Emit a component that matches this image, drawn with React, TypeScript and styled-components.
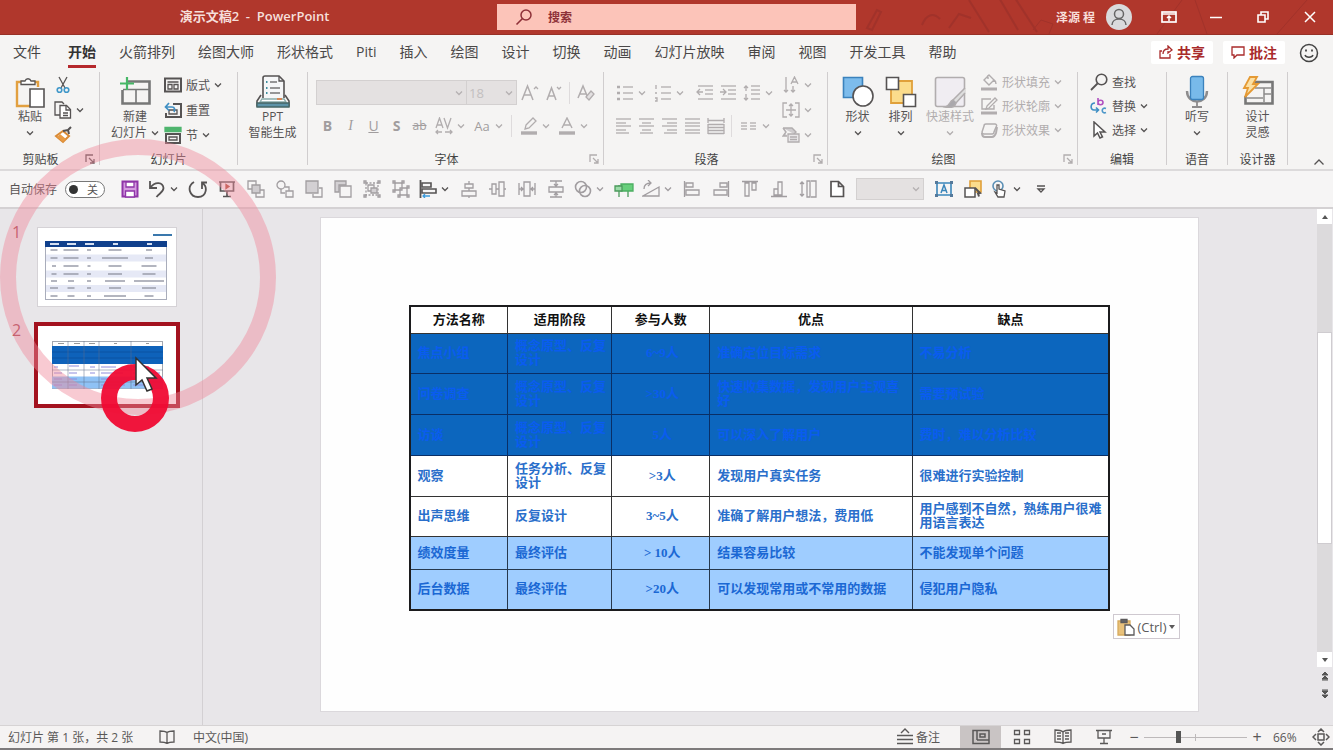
import React from "react";
import styled, { createGlobalStyle } from "styled-components";

const INK = "#565353";
const DIM = "#b1adae";
const RED = "#b0372c";

const GlobalStyle = createGlobalStyle`
  * { box-sizing: border-box; }
  html, body, #root { height: 100%; margin: 0; }
  body {
    font-family: "Open Sans", "Noto Sans CJK SC", sans-serif;
    font-size: 12px;
    color: #444;
    background: #e8e6e8;
  }
  button, select, input { font: inherit; color: inherit; margin: 0; }
  button { background: none; border: 0; padding: 0; cursor: default; white-space: nowrap; }
`;

/* ---------- icons ---------- */

type Glyph = { w: number; h: number; art: React.ReactNode };

const g = (w: number, h: number, art: React.ReactNode): Glyph => ({ w, h, art });

const bars = (rows: [number, number, number][]) => (
  <>
    {rows.map(([x, y, len]) => (
      <path key={`${x}-${y}`} d={`M${x} ${y}h${len}`} />
    ))}
  </>
);

const GLYPHS: Record<string, Glyph> = {
  chevron: g(8, 6, <path d="M1 1.500l3 3 3-3" />),
  caretUp: g(12, 8, <path d="M1.500 6.500L6 2l4.500 4.500" />),
  launcher: g(10, 10, <path d="M1 8V1h7M4 4l4.500 4.500M9 5v4H5" />),
  search: g(18, 18, <><circle cx="11" cy="7" r="5" strokeWidth="1.500" /><path d="M7.500 10.500L1.500 16.500" strokeWidth="1.600" /></>),
  paste: g(32, 32, <>
    <path d="M9 6H3v24h13" stroke="#e2a040" strokeWidth="2.400" /><path d="M19 6h5v5" stroke="#e2a040" strokeWidth="2.400" />
    <path d="M7 8.500V5h4c1-3 5-3 6 0h4v3.500z" fill="#fff" /><path d="M16 13h14v18H16z" fill="#fff" strokeWidth="1.600" />
  </>),
  cut: g(18, 18, <><path d="M5 1l6 11M13 1L7 12" /><circle cx="5.500" cy="14" r="2.300" stroke="#3f97c9" strokeWidth="1.600" /><circle cx="12.500" cy="14" r="2.300" stroke="#3f97c9" strokeWidth="1.600" /></>),
  copy: g(18, 18, <><path d="M6 14H1V1h7l2 2" /><path d="M6 4.500h6.500l4 4V17H6z" fill="#fff" /><path d="M12 5v4h4" /><path d="M9 12h5M9 14.500h5" /></>),
  painter: g(18, 18, <><path d="M9 5l6 5-6 6-7-6z" fill="#fff" stroke="#d98a35" strokeWidth="2" /><path d="M3 11l6 5 3-3-6-5z" fill="#e89a43" stroke="none" /><path d="M9 5l5-1 3-3M14 4l1 4" strokeWidth="2" /></>),
  newSlide: g(32, 32, <><path d="M9 5.500h21.500v22H3.500V14" strokeWidth="2.600" stroke="#777" /><path d="M4 13.500h26M17 14v13" stroke="#777" strokeWidth="1.600" /><path d="M8 1v13M1 7.500h14" stroke="#46b766" strokeWidth="2.200" /></>),
  layout: g(18, 18, <><rect x="1" y="2.500" width="16" height="13" strokeWidth="2" /><path d="M3.500 6h11" strokeWidth="1.500" /><path d="M4 8.500h4v4.500H4zM10 8.500h4v4.500h-4z" /></>),
  reset: g(18, 18, <><path d="M9 3h8v13H2v-4" strokeWidth="2" /><path d="M5 9h8v4H5z" /><path d="M2 6h6c3 0 3 3 2 5M5 2L1.500 6 5 9.500" stroke="#3f8fc4" strokeWidth="1.700" /></>),
  section: g(18, 18, <><path d="M1 1.500h16v4H1z" fill="#4fb56e" stroke="#4fb56e" /><rect x="2" y="8" width="14" height="9" strokeWidth="2" /><path d="M5 11h8v3H5z" /></>),
  pptGen: g(36, 34, <>
    <path d="M8 23V3c0-1 1-2 2-2h14l5 5v17" fill="#f6f7f8" strokeWidth="1.600" /><path d="M24 1v5h5" />
    <path d="M15 7h7M15 13h10M15 18h10" stroke="#777" strokeWidth="1.600" /><path d="M11 7h1.500M11 13h1.500M11 18h1.500" stroke="#3e8f9f" strokeWidth="2" />
    <path d="M6 20l-4 6v5h32v-5l-4-6" strokeWidth="1.600" /><path d="M7 24h22l2 3H5z" fill="#fff" stroke="#8aa" /><path d="M2 28h32v4H2z" fill="#5d93a8" stroke="#466" /><path d="M22 24h5" stroke="#e0773b" strokeWidth="1.600" />
  </>),
  shapes: g(32, 32, <><path d="M1.500 1.500h19v20h-19z" fill="#7dbcec" stroke="#3b82bd" strokeWidth="1.600" /><circle cx="21" cy="20" r="10" fill="#fff" strokeWidth="1.600" /></>),
  arrange: g(32, 32, <><path d="M6 5h21v22H6z" fill="#fbdc8c" stroke="#e0a03a" strokeWidth="1.800" /><path d="M1.500 1.500h12v12h-12zM18.500 18.500h12v12h-12z" fill="#fff" strokeWidth="1.600" /></>),
  quick: g(32, 32, <><rect x="1.500" y="1.500" width="29" height="29" rx="2" fill="#f0edf2" strokeWidth="1.600" /><path d="M31 12L19 24l3 3 9-10" fill="#ddd" strokeWidth="1.500" /><path d="M19 24c-4 1-2 5-8 7 5 1 10 1 11-4" fill="#aaa8ac" /></>),
  fill: g(18, 18, <><path d="M9 2l5 5-5 5-5-5zM8 2v4M14 7c2 1 2 3 2 4" strokeWidth="1.400" /><path d="M1 16h16" strokeWidth="3" /></>),
  outline: g(18, 18, <><path d="M11 2H2v10h12V8" strokeWidth="1.400" /><path d="M7 9l8-8 2 2-8 8-3 1z" /><path d="M1 16h16" strokeWidth="3" /></>),
  effects: g(18, 18, <><path d="M6 3h9c1 0 2 1 1.500 2L14 11c0 1-1 2-2 2H4c-2 0-2-1-2-2l2-6c0-1 1-2 2-2z" strokeWidth="1.500" /><path d="M2 12c0 3 1 4 3 4h7c2 0 3-1 4-4l1-6" strokeWidth="2" /></>),
  find: g(18, 18, <><circle cx="11.500" cy="6.500" r="5.300" strokeWidth="1.600" /><path d="M7.500 10.500L1 17" strokeWidth="1.800" /></>),
  replace: g(18, 18, <><path d="M8 1v7M8 5.500c0-3 5-3 5 0s-5 3-5 0" stroke="#b04fc0" strokeWidth="1.600" /><path d="M5 6c-5 0-5 7-1 7h4M6 10.500L8.500 13 6 15.500" stroke="#3f8fc4" strokeWidth="1.600" /><path d="M16 11.500c-5-2-5 6 0 4" stroke="#4d97c9" strokeWidth="1.600" /></>),
  select: g(18, 18, <path d="M4 1v14l3.500-3 2.500 5 2.500-1.200L10 11h5z" fill="#fff" strokeWidth="1.500" />),
  mic: g(32, 34, <><path d="M6 16c0 14 20 14 20 0" stroke="#8e8c8d" strokeWidth="2.400" /><path d="M16 26v6M11 32h10" stroke="#8e8c8d" strokeWidth="1.800" /><rect x="9.500" y="1.500" width="13" height="23" rx="2" fill="#78baea" stroke="#3b82bd" /></>),
  ideas: g(32, 32, <><path d="M12 6h18.500v21.500H3.500V20" strokeWidth="2.600" stroke="#777" /><path d="M13 12h16M22 12v14M22 18h7M5 22h16" stroke="#8c8a8b" strokeWidth="1.500" /><path d="M8 1h7l-4 7h5L3 21l3-9H2z" fill="#fbe0a4" stroke="#e59a34" strokeWidth="1.800" /></>),
  bullets: g(18, 18, <><path d="M1 3h3M1 9h3M1 15h3" strokeWidth="2.400" />{bars([[7, 3, 10], [7, 9, 10], [7, 15, 10]])}</>),
  numbers: g(18, 18, <><path d="M2 1v4M1 9h2M1 14h2v3H1" />{bars([[7, 3, 10], [7, 9, 10], [7, 15, 10]])}</>),
  outdent: g(18, 18, <>{bars([[2, 2, 15], [9, 6, 8], [9, 10, 8], [2, 15, 15]])}<path d="M7 8H1M4 5L1 8l3 3" /></>),
  indent: g(18, 18, <>{bars([[2, 2, 15], [9, 6, 8], [9, 10, 8], [2, 15, 15]])}<path d="M1 8h6M4 5l3 3-3 3" /></>),
  spacing: g(18, 18, <>{bars([[8, 2, 9], [8, 6, 9], [8, 10, 9], [8, 15, 9]])}<path d="M3 2v5M1 4l2-2 2 2M3 10v6M1 14l2 2 2-2" /></>),
  left: g(18, 18, bars([[1, 2, 15], [1, 6, 10], [1, 9, 15], [1, 13, 10], [1, 16, 13]])),
  center: g(18, 18, bars([[1, 2, 15], [4, 6, 9], [1, 9, 15], [4, 13, 9], [2, 16, 13]])),
  right: g(18, 18, bars([[1, 2, 15], [6, 6, 10], [1, 9, 15], [6, 13, 10], [3, 16, 13]])),
  justify: g(18, 18, bars([[1, 2, 15], [1, 6, 15], [1, 9, 15], [1, 13, 15], [1, 16, 15]])),
  distribute: g(18, 18, <><path d="M1 1v5M17 1v5M1 3.500h16M1 7.500h16M1 10.500h16M1 13.500h16M1 16.500h16M1 7v10M17 7v10" /></>),
  columns: g(18, 18, bars([[1, 6, 6], [1, 9, 6], [1, 12, 6], [10, 6, 6], [10, 9, 6], [10, 12, 6]])),
  direction: g(18, 18, <><path d="M4 1v15M2 14l2 2 2-2M11 10v6M9 14l2 2 2-2M9 8l3.500-7L16 8M10 6h5" /></>),
  alignText: g(18, 18, <><path d="M5 2H1v14h4M13 2h4v14h-4M9 3v12M4 9h10M7 5l2-2 2 2M7 13l2 2 2-2" /></>),
  smartArt: g(18, 18, <><path d="M1 2h9l4 4-2 2M1 2l3 4-3 4h4" fill="#cfccce" strokeWidth="1.400" /><path d="M6 8h11v8H6z" fill="#e9e7e8" /><path d="M8 11h7M8 13.500h7" /></>),
  grow: g(20, 18, <><path d="M2 16L7.500 2 13 16M4 11h7" strokeWidth="1.500" /><path d="M14 5l2-2 2 2" /></>),
  shrink: g(20, 18, <><path d="M3 16L7.500 4 12 16M5 12h5" strokeWidth="1.500" /><path d="M13 3l2 2 2-2" /></>),
  clear: g(20, 18, <><path d="M2 14L7 2l5 12M4 10h6" strokeWidth="1.500" /><path d="M10 13l5-6 3 3-5 6z" fill="#e3e0e1" /></>),
  kerning: g(18, 18, <><path d="M1 11L4.500 1 8 11M2 8h5M9 1l3.500 10L16 1" strokeWidth="1.300" /><path d="M1 15h6M10 15h7M3 13l-2 2 2 2M15 13l2 2-2 2" /></>),
  pen: g(18, 18, <><path d="M6 8l7-7 3 3-7 7-4 1z" strokeWidth="1.300" /><path d="M1 16h16" strokeWidth="3.400" /></>),
  fontColor: g(18, 18, <><path d="M4 11L9 1l5 10M6 8h6" strokeWidth="1.400" /><path d="M1 16h16" strokeWidth="3.400" /></>),
  save: g(18, 18, <><path d="M1.500 1.500h15v15h-15z" fill="#d59be0" stroke="#8f35a8" strokeWidth="2" /><path d="M5 2h8v5H5z" fill="#fff" stroke="#8f35a8" /><path d="M4.500 11h9v6h-9z" fill="#fff" stroke="#8f35a8" strokeWidth="1.400" /></>),
  undo: g(18, 18, <path d="M2 1v7h7M2.500 7.500C7 1 15 2 15.500 8c0 4-4 5-7 9" strokeWidth="1.800" />),
  redo: g(20, 18, <path d="M6 2c-8 5-4 15 4 15 9 0 10-11 4-14M14 9V2.500h5" strokeWidth="1.800" />),
  show: g(18, 18, <><path d="M1 2h16M2.500 2v9h13V2M9 11v5M5 16.500h8" strokeWidth="1.700" /><path d="M8 4.500l3 2-3 2z" fill="#b04a36" stroke="#b04a36" /></>),
  forward: g(18, 18, <><path d="M1 1h8v8H1zM9 10h8v7H9z" /><path d="M5 5h8v8H5z" fill="#cfcccf" /></>),
  backward: g(18, 18, <><circle cx="5" cy="5" r="4" /><path d="M9 7h4v4M5 9v4h4M10 11h7v6h-7z" /></>),
  front: g(18, 18, <><path d="M8 14v3h9V8h-3" /><path d="M1 1h12v12H1z" fill="#d3d0d3" /></>),
  back: g(18, 18, <><path d="M1 1h11v4H5v7H1z" fill="#d3d0d3" /><path d="M6 6h11v11H6z" /></>),
  group: g(18, 18, <><path d="M3 3h12v12H3z" strokeDasharray="2 1.500" /><path d="M5 5h6v6H5z" /><path d="M8 8h6v5H8z" fill="#d3d0d3" /><path d="M1 1h2v2H1zM15 1h2v2h-2zM1 15h2v2H1zM15 15h2v2h-2z" /></>),
  ungroup: g(18, 18, <><path d="M3 3h7v7H3zM8 8h7v7H8z" /><path d="M1 1h2v2H1zM10 1h2v2h-2zM1 10h2v2H1zM15 6h2v2h-2zM15 15h2v2h-2zM6 15h2v2H6z" /></>),
  alignMenu: g(18, 18, <><path d="M1.500 0v18" strokeWidth="1.800" /><path d="M3 3h9v4H3zM3 9h14v4H3z" strokeWidth="1.600" /><path d="M4 16h7M6 14l-2 2 2 2" stroke="#3b9adb" /></>),
  alignCenterH: g(18, 18, <path d="M5 4h8v4H5zM2 11h14v5H2zM9 1v3M9 8v3M9 16v2" />),
  alignMiddle: g(18, 18, <path d="M3 4h4v10H3zM10 2h5v14h-5zM0 9h3M7 9h3M15 9h2" />),
  distH: g(18, 18, <path d="M1 3v12M17 3v12M6 2h6v14H6zM1 9h4M3 7l2 2-2 2M17 9h-4M15 7l-2 2 2 2" />),
  distV: g(18, 18, <path d="M3 1h12M3 17h12M2 7h14v5H2zM9 1v5M7 4l2 2 2-2M9 17v-4M7 15l2-2 2 2" />),
  merge: g(18, 18, <><circle cx="7" cy="7" r="5.500" strokeWidth="1.600" /><circle cx="11" cy="11" r="5.500" strokeWidth="1.600" /></>),
  flag: g(20, 18, <><path d="M5 5v12M14 11v6" stroke="#4c9a5c" /><path d="M7 4h12v7H7z" fill="#67cf7b" stroke="#4cae62" /><path d="M1 6h7v5H1z" fill="#9bdba8" stroke="#4c9a5c" /></>),
  rotate: g(18, 18, <><path d="M1 16h16V7z" /><path d="M2 9c0-4 3-6 7-6M6 0l3 3-3 3" /></>),
  alignL: g(18, 18, <path d="M1.500 1v16M3 3h7v4H3zM3 10h13v5H3z" />),
  alignR: g(18, 18, <path d="M16.500 1v16M8 3h7v4H8zM2 10h13v5H2z" />),
  alignT: g(18, 18, <path d="M1 1.500h16M4 3h4v13H4zM11 3h4v7h-4z" />),
  alignB: g(18, 18, <path d="M1 16.500h16M4 9h4v6H4zM8 2h4v13H8z" />),
  sameH: g(18, 18, <path d="M8 1h3v16H8zM12 1h5v16h-5M3 2v14M1 4l2-2 2 2M1 14l2 2 2-2" />),
  page: g(16, 18, <path d="M2 1.500h7.500l5 5v10H2zM9.500 1.500v5h5" fill="#fff" strokeWidth="1.700" />),
  textBox: g(18, 18, <><path d="M2 3h14v12H2z" stroke="#3b86ba" strokeWidth="1.600" /><path d="M6 13l3-8 3 8M7 10.500h4" stroke="#3b86ba" strokeWidth="1.500" /><path d="M0 1h3v3H0zM15 1h3v3h-3zM0 14h3v3H0zM15 14h3v3h-3z" fill="#55799a" stroke="none" /></>),
  pickObj: g(18, 18, <><path d="M6 1h11v11H6z" fill="#fbdc8c" stroke="#e0a03a" strokeWidth="1.600" /><path d="M1 8h10v9H1z" fill="#fff" strokeWidth="1.500" /><path d="M11 8l5 5-2 .5 1 3" strokeWidth="2" /></>),
  touch: g(18, 18, <><circle cx="7" cy="6" r="5" stroke="#5b8fb5" strokeWidth="1.600" /><path d="M6 5v8l-2-1 3 5h6l1-6-6-2V5z" fill="#fff" strokeWidth="1.300" /></>),
  more: g(10, 8, <path d="M1 1h8M2 4l3 3 3-3z" />),
  share: g(14, 14, <path d="M3 6H1v7h10V9M4 9c0-4 3-5 5-5V1l4 4-4 3V6" />),
  comment: g(14, 14, <path d="M1 2h12v8H6l-3 3v-3H1z" />),
  smile: g(20, 20, <><circle cx="10" cy="10" r="8.500" strokeWidth="1.500" /><path d="M6 12c1 3 7 3 8 0" strokeWidth="1.400" /><path d="M7 6.500v2M13 6.500v2" strokeWidth="1.800" /></>),
  ribbonMode: g(16, 12, <><rect x="1" y="1" width="14" height="10" strokeWidth="1.700" /><path d="M1 3h14M8 10V5M6 7l2-2 2 2" strokeWidth="1.500" /></>),
  minimize: g(12, 12, <path d="M0 6.500h12" strokeWidth="1.500" />),
  restore: g(12, 12, <path d="M1 4h7v7H1zM4 3.500V1h7v7H8.500" strokeWidth="1.600" />),
  close: g(12, 12, <path d="M1 1l10 10M11 1L1 11" strokeWidth="1.500" />),
  book: g(16, 14, <path d="M8 2.500C6 1 4 1 1 1v11c3 0 5 0 7 1.500C10 12 11 12 15 12V1c-3 0-5 0-7 1.500zM8 3v10" />),
  notes: g(18, 18, <path d="M1 7.500h16M1 11.500h16M1 15.500h16M5 5l4-4 4 4" strokeWidth="1.400" />),
  normal: g(18, 16, <path d="M1 1.500h16v13H1zM5 2v9M5 11h12M8 5h5v3H8z" strokeWidth="1.500" />),
  sorter: g(18, 16, <path d="M1.500 1.500h5v4h-5zM11.500 1.500h5v4h-5zM1.500 10.500h5v4h-5zM11.500 10.500h5v4h-5z" />),
  reading: g(18, 16, <><path d="M9 3C7 1 5 1 1 1v12c4 0 6 0 8 1.500 2-1.500 4-1.500 8-1.500V1c-4 0-6 0-8 2zM9 3v11" /><path d="M3 4h4M3 7h4M3 10h4M11 4h4M11 7h4M11 10h4" /></>),
  present: g(18, 16, <path d="M1 1.500h16M3 2v7h12V2M9 9v5M5 14.500h8M7 5h4" strokeWidth="1.300" />),
  fit: g(18, 18, <path d="M6 6h6v6H6zM6 4l3-3 3 3M6 14l3 3 3-3M4 6L1 9l3 3M14 6l3 3-3 3" strokeWidth="1.500" />),
  person: g(26, 26, <><circle cx="13" cy="13" r="13" fill="#d9dadc" stroke="none" /><circle cx="13" cy="10" r="4.500" strokeWidth="1.500" /><path d="M6 21c0-8 14-8 14 0" strokeWidth="1.500" /></>),
  up: g(8, 6, <path d="M1 5l3-4 3 4z" fill="currentColor" stroke="none" />),
  down: g(8, 6, <path d="M1 1l3 4 3-4z" fill="currentColor" stroke="none" />),
  prev: g(8, 10, <path d="M1 4l3-3 3 3zM1 8l3-3 3 3zM1 9h6" fill="currentColor" strokeWidth="1" />),
  next: g(8, 10, <path d="M1 1h6M1 2l3 3 3-3zM1 6l3 3 3-3z" fill="currentColor" strokeWidth="1" />),
  pasteSmall: g(18, 18, <><path d="M1 3h12v14H1z" fill="#e9c17a" stroke="#d8ab5d" /><path d="M4 1.500h6v3H4z" fill="#666" /><path d="M8 7h5l4 4v6H8z" fill="#fff" /></>),
};

const Svg = styled.svg`
  display: block;
  flex: none;
  fill: none;
  stroke: currentColor;
  stroke-width: 1.300;
`;

const Icon = ({ name }: { name: string }) => {
  const { w, h, art } = GLYPHS[name];
  return (
    <Svg width={w} height={h} viewBox={`0 0 ${w} ${h}`} aria-hidden="true">
      {art}
    </Svg>
  );
};

/* ---------- frame ---------- */

const Window = styled.div`
  position: relative;
  display: flex;
  flex-direction: column;
  min-height: 100%;
  overflow: hidden;
  border-bottom: 2px solid #7d7a7b;
`;

const TitleBar = styled.header`
  position: relative;
  display: grid;
  grid-template-columns: 497fr 359fr 477fr;
  align-items: center;
  height: 35px;
  background: ${RED};
  border-bottom: 1px solid #973026;
  color: #fff;
`;

const TitlePattern = styled.svg`
  position: absolute;
  right: 0;
  top: 0;
  width: 476px;
  height: 34px;
  fill: none;
  stroke: #98302a;
  opacity: 0.6;
`;

const DocTitle = styled.h1`
  margin: 0;
  padding-left: 12px;
  text-align: center;
  font-size: 13px;
  font-weight: 600;
  line-height: 16px;
  padding-bottom: 2px;
  color: #f6dfdb;
  white-space: pre;
`;

const SearchBox = styled.label`
  display: flex;
  align-items: center;
  gap: 13px;
  height: 26px;
  padding-left: 18px;
  background: #fcc4b9;
  color: #8e3038;
`;

const SearchInput = styled.input`
  flex: 1;
  min-width: 0;
  border: 0;
  outline: 0;
  background: none;
  font-weight: 600;
  &::placeholder { color: #8e3038; opacity: 1; }
`;

const WindowControls = styled.div`
  position: relative;
  display: flex;
  align-items: center;
  justify-content: flex-end;
`;

const Account = styled.button`
  display: flex;
  align-items: center;
  gap: 11px;
  margin-right: 13px;
  color: #f8dfdb;
  font-weight: 600;
  svg { color: #666; }
`;

const WindowButton = styled.button`
  display: grid;
  place-items: center;
  width: 47px;
  height: 34px;
`;

const TabRow = styled.nav`
  display: flex;
  align-items: center;
  height: 35px;
  background: #f5f4f3;
  font-size: 14px;
`;

const FileTab = styled.button`
  width: 54px;
  height: 30px;
  padding-bottom: 3px;
  text-align: center;
`;

const TabList = styled.div`
  display: flex;
  flex: 1;
  gap: 23px;
  padding-left: 14px;
`;

const Tab = styled.button<{ $active?: boolean }>`
  height: 30px;
  border-bottom: 3px solid ${(p) => (p.$active ? "#b5282c" : "transparent")};
  font-weight: ${(p) => (p.$active ? 700 : 400)};
  color: ${(p) => (p.$active ? "#333" : "#4a4848")};
`;

const TabActions = styled.div`
  display: flex;
  align-items: center;
  gap: 10px;
  padding-right: 14px;
`;

const ActionButton = styled.button`
  display: flex;
  align-items: center;
  justify-content: center;
  gap: 4px;
  width: 62px;
  height: 23px;
  padding-bottom: 2px;
  background: #fff;
  border-radius: 2px;
  color: #a92b2b;
  font-weight: 700;
`;

const FeedbackButton = styled.button`
  margin-left: 4px;
`;

/* ---------- ribbon ---------- */

const Ribbon = styled.section`
  display: flex;
  height: 101px;
  background: #f5f4f3;
  border-bottom: 2px solid #dcdadb;
`;

const Group = styled.div<{ $w: number }>`
  display: flex;
  flex-direction: column;
  flex: none;
  width: ${(p) => p.$w}px;
`;

const Divider = styled.div`
  flex: none;
  width: 1px;
  margin: 2px 0 4px;
  background: #d0cdce;
`;

const GroupBody = styled.div<{ $left?: number }>`
  display: flex;
  flex: 1;
  padding-left: ${(p) => p.$left ?? 8}px;
`;

const GroupFooter = styled.div`
  display: flex;
  align-items: center;
  height: 20px;
`;

const GroupName = styled.span`
  flex: 1;
  text-align: center;
`;

const Launcher = styled.button<{ $dim?: boolean }>`
  width: 18px;
  padding-left: 4px;
  color: ${(p) => (p.$dim ? DIM : INK)};
`;

const BigButton = styled.button<{ $w: number; $dim?: boolean }>`
  display: flex;
  flex-direction: column;
  align-items: center;
  align-self: flex-start;
  width: ${(p) => p.$w}px;
  padding-top: 5px;
  line-height: 16px;
  color: ${(p) => (p.$dim ? DIM : INK)};
`;

const BigIcon = styled.span`
  display: grid;
  place-items: center;
  height: 34px;
`;

const BigLine = styled.span`
  display: flex;
  align-items: center;
  gap: 4px;
  height: 16px;
`;

const Stack = styled.div<{ $tight?: boolean }>`
  display: grid;
  align-content: start;
  grid-auto-rows: ${(p) => (p.$tight ? 24 : 25)}px;
  padding-top: ${(p) => (p.$tight ? 0 : 2)}px;
`;

const SmallButton = styled.button<{ $dim?: boolean }>`
  display: flex;
  align-items: center;
  gap: 4px;
  padding: 0 2px;
  color: ${(p) => (p.$dim ? DIM : INK)};
`;

const ToolRows = styled.div<{ $w?: number }>`
  display: flex;
  flex-direction: column;
  gap: 8px;
  width: ${(p) => (p.$w ? `${p.$w}px` : "auto")};
  padding-top: 10px;
  color: ${DIM};
`;

const ToolRow = styled.div`
  display: flex;
  align-items: center;
  height: 25px;
`;

const ToolPart = styled.div`
  display: flex;
  align-items: center;
  & + & { margin-left: 5px; }
`;

const IconButton = styled.button<{ $w?: number }>`
  display: grid;
  place-items: center;
  flex: none;
  width: ${(p) => p.$w ?? 23}px;
  height: 24px;
`;

const LetterButton = styled(IconButton)<{ $kind: "b" | "i" | "u" | "s" | "ab" }>`
  font-size: ${(p) => (p.$kind === "ab" ? 12 : 14)}px;
  color: #a19d9e;
  font-weight: ${(p) => (p.$kind === "b" || p.$kind === "s" ? 700 : 400)};
  font-style: ${(p) => (p.$kind === "i" ? "italic" : "normal")};
  font-family: ${(p) => (p.$kind === "i" ? '"Liberation Serif", serif' : "inherit")};
  text-decoration: ${(p) => (p.$kind === "u" ? "underline" : p.$kind === "ab" ? "line-through" : "none")};
`;

const DropButton = styled.button`
  display: flex;
  align-items: center;
  gap: 4px;
  flex: none;
  width: 38px;
  height: 24px;
  padding-left: 4px;
`;

const CaseLabel = styled.span`
  width: 18px;
  font-size: 13px;
  color: #a19d9e;
`;

const ToolSep = styled.span`
  width: 1px;
  height: 22px;
  margin: 0 4px;
  background: #dedbdc;
`;

const Combo = styled.label<{ $w: number; $h: number }>`
  display: grid;
  align-items: center;
  flex: none;
  width: ${(p) => p.$w}px;
  height: ${(p) => p.$h}px;
  background: #e4e1e1;
  border: 1px solid #d3d0d0;
  color: #b5b1b2;
  & > * { grid-area: 1 / 1; }
  svg { justify-self: end; margin-right: 3px; pointer-events: none; }
  & + & { border-left: 0; }
`;

const ComboSelect = styled.select`
  appearance: none;
  width: 100%;
  border: 0;
  padding: 0 2px;
  background: none;
  outline: 0;
  font-size: 13px;
`;

const Collapse = styled.button`
  flex: 1;
  display: flex;
  align-items: flex-end;
  justify-content: flex-end;
  padding: 0 8px 3px 0;
  color: ${INK};
`;

/* ---------- quick access ---------- */

const QuickBar = styled.section`
  display: flex;
  align-items: center;
  height: 38px;
  padding-left: 9px;
  background: #f6f5f5;
  border-bottom: 2px solid #d4d1d3;
  color: #a19da0;
`;

const AutoSave = styled.label`
  display: flex;
  align-items: center;
  gap: 8px;
  width: 106px;
  color: ${INK};
`;

const Toggle = styled.span`
  display: flex;
  align-items: center;
  justify-content: space-between;
  width: 40px;
  height: 17px;
  padding: 0 6px 0 3px;
  border: 1px solid #777;
  border-radius: 9px;
  font-size: 11px;
  background: #fff;
`;

const ToggleInput = styled.input`
  appearance: none;
  width: 9px;
  height: 9px;
  border-radius: 50%;
  background: #333;
`;

const QuickButton = styled(IconButton)<{ $on?: boolean }>`
  width: 29px;
  color: ${(p) => (p.$on ? INK : "inherit")};
`;

const QuickDrop = styled(DropButton)<{ $on?: boolean }>`
  width: 39px;
  color: ${(p) => (p.$on ? INK : "inherit")};
`;

const QuickCombo = styled(Combo)`
  margin: 0 5px;
`;

/* ---------- work area ---------- */

const Work = styled.main`
  display: flex;
  flex: 1;
  background: #e8e6e9;
`;

const SlidePane = styled.ol`
  display: flex;
  flex-direction: column;
  gap: 20px;
  flex: none;
  width: 203px;
  margin: 0;
  padding: 19px 0 0 12px;
  list-style: none;
  border-right: 1px solid #d3d0d3;
`;

const SlideItem = styled.li`
  display: flex;
  gap: 4px;
`;

const SlideNumber = styled.span`
  width: 22px;
  font-size: 16px;
  line-height: 8px;
  color: #a5414d;
`;

const ThumbButton = styled.button<{ $selected?: boolean }>`
  width: 138px;
  height: 78px;
  background: #fff;
  box-shadow: ${(p) => (p.$selected ? "0 0 0 4px #a3121f" : "0 0 0 1px #d5d2d6")};
`;

const Thumb = styled.svg`
  display: block;
  width: 138px;
  height: 78px;
`;

const Stage = styled.div`
  display: flex;
  flex: 1;
  justify-content: center;
  align-items: flex-start;
  padding-top: 8px;
`;

const Slide = styled.article`
  width: 79%;
  aspect-ratio: 16 / 9;
  padding-top: 87px;
  background: #fefefe;
  border: 1px solid #dbd8dc;
`;

const TableArea = styled.div`
  position: relative;
  width: 80%;
  margin: 0 auto;
`;

const DataTable = styled.table`
  width: 100%;
  table-layout: fixed;
  border-collapse: collapse;
  border: 2px solid #1c1c1e;
  font-family: "Liberation Serif", "Noto Sans CJK SC", serif;
  font-size: 13px;
  font-weight: 700;
  line-height: 14px;
`;

const TONES = {
  head: { bg: "#ffffff", fg: "#111111", line: "#333333" },
  deep: { bg: "#0c66be", fg: "#0a5cf0", line: "#0a2f66" },
  plain: { bg: "#ffffff", fg: "#2a6fcb", line: "#333333" },
  light: { bg: "#9fcdff", fg: "#1b68d4", line: "#26384d" },
};

type Tone = keyof typeof TONES;

const Row = styled.tr<{ $tone: Tone; $h: number }>`
  height: ${(p) => p.$h}px;
  background: ${(p) => TONES[p.$tone].bg};
  color: ${(p) => TONES[p.$tone].fg};
  td, th { border: 1px solid ${(p) => TONES[p.$tone].line}; }
`;

const HeadCell = styled.th`
  padding: 0;
`;

const Cell = styled.td<{ $center?: boolean }>`
  padding: 0 4px 0 7px;
  text-align: ${(p) => (p.$center ? "center" : "left")};
`;

const PasteOptions = styled.button`
  position: absolute;
  left: 100%;
  top: 100%;
  display: flex;
  align-items: center;
  gap: 2px;
  width: 67px;
  height: 25px;
  margin: 3px 0 0 3px;
  padding: 0 3px;
  background: #fff;
  border: 1px solid #cfc9d0;
  font-size: 13px;
  color: #5c5a5b;
`;

const ScrollBar = styled.div`
  display: flex;
  flex-direction: column;
  align-items: center;
  width: 17px;
  padding-bottom: 22px;
  color: #555;
`;

const ScrollButton = styled.button<{ $plain?: boolean }>`
  display: grid;
  place-items: center;
  width: 15px;
  height: ${(p) => (p.$plain ? 18 : 15)}px;
  background: ${(p) => (p.$plain ? "none" : "#fff")};
`;

const ScrollTrack = styled.div`
  display: grid;
  grid-template-rows: 108fr 212fr 108fr;
  flex: 1;
  width: 15px;
  background: #dcdadc;
`;

const ScrollThumb = styled.div`
  grid-row: 2;
  background: #fff;
  border: 1px solid #cfccd0;
`;

/* ---------- status bar ---------- */

const StatusBar = styled.footer`
  display: flex;
  align-items: center;
  height: 23px;
  padding-left: 8px;
  background: #f5f3f3;
  border-top: 1px solid #d6d3d4;
  color: #5a5858;
`;

const StatusLeft = styled.div`
  display: flex;
  flex: 1;
  align-items: center;
  gap: 18px;
`;

const SlideCount = styled.span`
  min-width: 133px;
`;

const NotesButton = styled.button`
  display: flex;
  align-items: center;
  gap: 2px;
  margin-right: 20px;
`;

const ViewButton = styled.button<{ $on?: boolean }>`
  display: grid;
  place-items: center;
  width: 41px;
  height: 22px;
  background: ${(p) => (p.$on ? "#c9c4c4" : "none")};
`;

const ZoomSign = styled.button`
  width: 20px;
  font-size: 16px;
  line-height: 16px;
`;

const ZoomRange = styled.input`
  appearance: none;
  width: 103px;
  height: 14px;
  background: linear-gradient(#bdb9ba, #bdb9ba) center / 100% 1px no-repeat,
    linear-gradient(#bdb9ba, #bdb9ba) center / 1px 7px no-repeat;
  &::-webkit-slider-thumb {
    appearance: none;
    width: 5px;
    height: 12px;
    background: #555;
  }
`;

const ZoomValue = styled.output`
  width: 34px;
  margin-left: 6px;
`;

const FitButton = styled.button`
  margin: 0 3px 0 5px;
`;

/* ---------- click highlight over the window ---------- */

const ClickHighlight = styled.svg`
  position: absolute;
  left: 0;
  top: 138px;
  width: 278px;
  height: 300px;
  pointer-events: none;
`;

/* ---------- data ---------- */

const TABS = ["开始", "火箭排列", "绘图大师", "形状格式", "Piti", "插入", "绘图", "设计", "切换", "动画", "幻灯片放映", "审阅", "视图", "开发工具", "帮助"];

const COLUMNS: [string, string][] = [
  ["方法名称", "14%"],
  ["适用阶段", "14.900%"],
  ["参与人数", "14%"],
  ["优点", "28.900%"],
  ["缺点", "28.200%"],
];

const ROWS: { tone: Tone; h: number; cells: string[] }[] = [
  { tone: "deep", h: 40, cells: ["焦点小组", "概念原型、反复设计", "6~9人", "准确定位目标需求", "不易分析"] },
  { tone: "deep", h: 41, cells: ["问卷调查", "概念原型、反复设计", ">30人", "快速收集数据，发现用户主观喜好", "需要预试验"] },
  { tone: "deep", h: 41, cells: ["访谈", "概念原型、反复设计", "5人", "可以深入了解用户", "费时，难以分析比较"] },
  { tone: "plain", h: 41, cells: ["观察", "任务分析、反复设计", ">3人", "发现用户真实任务", "很难进行实验控制"] },
  { tone: "plain", h: 40, cells: ["出声思维", "反复设计", "3~5人", "准确了解用户想法，费用低", "用户感到不自然，熟练用户很难用语言表达"] },
  { tone: "light", h: 33, cells: ["绩效度量", "最终评估", "> 10人", "结果容易比较", "不能发现单个问题"] },
  { tone: "light", h: 41, cells: ["后台数据", "最终评估", ">20人", "可以发现常用或不常用的数据", "侵犯用户隐私"] },
];

type QuickItem = { icon: string; label: string; on?: boolean; drop?: boolean };

const QUICK_MAIN: QuickItem[] = [
  { icon: "save", label: "保存" },
  { icon: "undo", label: "撤消", on: true, drop: true },
  { icon: "redo", label: "重复", on: true },
  { icon: "show", label: "从头开始", on: true },
  { icon: "forward", label: "上移一层" },
  { icon: "backward", label: "下移一层" },
  { icon: "front", label: "置于顶层" },
  { icon: "back", label: "置于底层" },
  { icon: "group", label: "组合" },
  { icon: "ungroup", label: "取消组合" },
  { icon: "alignMenu", label: "对齐", on: true, drop: true },
  { icon: "alignCenterH", label: "水平居中" },
  { icon: "alignMiddle", label: "垂直居中" },
  { icon: "distH", label: "横向分布" },
  { icon: "distV", label: "纵向分布" },
  { icon: "merge", label: "合并形状", drop: true },
  { icon: "flag", label: "格式" },
  { icon: "rotate", label: "旋转", drop: true },
  { icon: "alignL", label: "左对齐" },
  { icon: "alignR", label: "右对齐" },
  { icon: "alignT", label: "顶端对齐" },
  { icon: "alignB", label: "底端对齐" },
  { icon: "sameH", label: "等高" },
  { icon: "page", label: "新建", on: true },
];

const QUICK_END: QuickItem[] = [
  { icon: "textBox", label: "文本框" },
  { icon: "pickObj", label: "选择窗格", on: true },
  { icon: "touch", label: "触摸模式", on: true, drop: true },
];

const QuickItems = ({ items }: { items: QuickItem[] }) => (
  <>
    {items.map(({ icon, label, on, drop }) =>
      drop ? (
        <QuickDrop key={icon} $on={on} aria-label={label}>
          <Icon name={icon} />
          <Icon name="chevron" />
        </QuickDrop>
      ) : (
        <QuickButton key={icon} $on={on} aria-label={label}>
          <Icon name={icon} />
        </QuickButton>
      )
    )}
  </>
);

const Tool = ({ icon, label }: { icon: string; label: string }) => (
  <IconButton aria-label={label}>
    <Icon name={icon} />
  </IconButton>
);

const Drop = ({ icon, label }: { icon: string; label: string }) => (
  <DropButton aria-label={label}>
    <Icon name={icon} />
    <Icon name="chevron" />
  </DropButton>
);

const Big = ({ icon, w, lines, menu, dim }: { icon: string; w: number; lines: string[]; menu?: "inline" | "below"; dim?: boolean }) => (
  <BigButton $w={w} $dim={dim}>
    <BigIcon>
      <Icon name={icon} />
    </BigIcon>
    {lines.map((line, i) => (
      <BigLine key={line}>
        {line}
        {menu === "inline" && i === lines.length - 1 && <Icon name="chevron" />}
      </BigLine>
    ))}
    {menu === "below" && (
      <BigLine>
        <Icon name="chevron" />
      </BigLine>
    )}
  </BigButton>
);

const Small = ({ icon, text, label, menu, dim }: { icon: string; text?: string; label?: string; menu?: boolean; dim?: boolean }) => (
  <SmallButton $dim={dim} aria-label={label}>
    <Icon name={icon} />
    {text}
    {menu && <Icon name="chevron" />}
  </SmallButton>
);

const Footer = ({ name, launcher, dim }: { name: string; launcher?: boolean; dim?: boolean }) => (
  <GroupFooter>
    <GroupName>{name}</GroupName>
    {launcher && (
      <Launcher $dim={dim} aria-label={`${name}选项`}>
        <Icon name="launcher" />
      </Launcher>
    )}
  </GroupFooter>
);

/* Miniature of slide 1: a striped table with a navy header. */
const FIRST_COLS = [16, 33, 51, 77, 111];
const FIRST_ROWS: [number, number[]][] = [
  [22, [7, 15, 4, 13, 6]],
  [30, [7, 15, 4, 26, 8]],
  [38, [4, 15, 3, 13, 15]],
  [46, [5, 15, 4, 14, 13]],
  [53, [6, 6, 4, 20, 30]],
  [60, [8, 7, 4, 12, 14]],
  [68, [7, 7, 4, 22, 9]],
];

const FirstThumb = () => (
  <Thumb viewBox="0 0 138 78">
    <path d="M115 7h19" stroke="#3a78ad" strokeWidth="2" />
    <rect x="7.500" y="13.500" width="121" height="58" fill="#fff" stroke="#a9adbb" />
    <path d="M8 30h120M8 46h120M8 60.500h120" stroke="#e6e9f6" strokeWidth="7" />
    <path d="M7 16h122" stroke="#10408c" strokeWidth="6" />
    {FIRST_COLS.map((x, i) => (
      <path key={x} d={`M${x - (i < 3 ? 4 : 2)} 16h${i < 3 ? 9 : 5}`} stroke="#d5e0f2" strokeWidth="2" />
    ))}
    {FIRST_ROWS.map(([y, widths]) =>
      widths.map((len, i) => (
        <path key={`${y}-${i}`} d={`M${FIRST_COLS[i] - len / 2} ${y}h${len}`} stroke="#9a9daa" strokeWidth="1.500" />
      ))
    )}
  </Thumb>
);

/* Miniature of slide 2: the table on the stage. */
const SecondThumb = () => (
  <Thumb viewBox="0 0 138 78">
    <rect x="14.500" y="15.500" width="110" height="47" fill="#fff" stroke="#a4a8b0" />
    <path d="M14 29h111" stroke="#0e62ba" strokeWidth="18" />
    <path d="M14 56.500h111" stroke="#8fc2f5" strokeWidth="12" />
    <path d="M14 26h111M14 32h111" stroke="#0a4a94" strokeWidth="0.600" />
    <path d="M30 15v48M46 15v48M61 15v48M93 15v48M14 44h111M14 56h111" stroke="#5f6f88" strokeWidth="0.500" />
    <path d="M20 17.500h6M36 17.500h6M51 17.500h6M76 17.500h3M108 17.500h3" stroke="#999" />
    <path d="M16 41h4M31 40h10M52 41h5M63 41h15M95 41h16M16 47h8M31 47h8M52 47h5M63 47h22M95 47h27M16 53h8M31 53h8M63 53h12M95 53h16M16 59h8M31 59h8M63 59h24M95 59h12" stroke="#8f8cdc" />
  </Thumb>
);

export default function App() {
  return (
    <Window>
      <GlobalStyle />

      <TitleBar>
        <TitlePattern viewBox="0 0 476 34" aria-hidden="true">
          <path d="M10 28l10-18 4 2-9 18zM65 25c5-12 12-12 18-6M92 28l10-14 12 4M112 0l20 32M141 -4l20 34M158 -2l22 34" strokeWidth="2" />
          <path d="M176 30l8-10 12 4-4 10M300 34l25-34M338 0l12 34M420 34l30-34" />
        </TitlePattern>
        <DocTitle>{"演示文稿2  -  PowerPoint"}</DocTitle>
        <SearchBox>
          <Icon name="search" />
          <SearchInput type="text" placeholder="搜索" aria-label="搜索" />
        </SearchBox>
        <WindowControls>
          <Account>
            泽源 程
            <Icon name="person" />
          </Account>
          <WindowButton aria-label="功能区显示选项"><Icon name="ribbonMode" /></WindowButton>
          <WindowButton aria-label="最小化"><Icon name="minimize" /></WindowButton>
          <WindowButton aria-label="还原"><Icon name="restore" /></WindowButton>
          <WindowButton aria-label="关闭"><Icon name="close" /></WindowButton>
        </WindowControls>
      </TitleBar>

      <TabRow>
        <FileTab>文件</FileTab>
        <TabList>
          {TABS.map((name, i) => (
            <Tab key={name} $active={i === 0}>{name}</Tab>
          ))}
        </TabList>
        <TabActions>
          <ActionButton><Icon name="share" />共享</ActionButton>
          <ActionButton><Icon name="comment" />批注</ActionButton>
          <FeedbackButton aria-label="反馈"><Icon name="smile" /></FeedbackButton>
        </TabActions>
      </TabRow>

      <Ribbon>
        <Group $w={99}>
          <GroupBody>
            <Big icon="paste" w={44} lines={["粘贴"]} menu="below" />
            <Stack>
              <Small icon="cut" label="剪切" />
              <Small icon="copy" label="复制" menu />
              <Small icon="painter" label="格式刷" />
            </Stack>
          </GroupBody>
          <Footer name="剪贴板" launcher />
        </Group>
        <Divider />

        <Group $w={137}>
          <GroupBody>
            <Big icon="newSlide" w={54} lines={["新建", "幻灯片"]} menu="inline" />
            <Stack>
              <Small icon="layout" text="版式" menu />
              <Small icon="reset" text="重置" />
              <Small icon="section" text="节" menu />
            </Stack>
          </GroupBody>
          <Footer name="幻灯片" />
        </Group>
        <Divider />

        <Group $w={69}>
          <GroupBody $left={4}>
            <Big icon="pptGen" w={61} lines={["PPT", "智能生成"]} />
          </GroupBody>
        </Group>
        <Divider />

        <Group $w={295}>
          <GroupBody>
            <ToolRows>
              <ToolRow>
                <Combo $w={151} $h={25}>
                  <ComboSelect aria-label="字体" disabled><option> </option></ComboSelect>
                  <Icon name="chevron" />
                </Combo>
                <Combo $w={50} $h={25}>
                  <ComboSelect aria-label="字号" disabled><option>18</option></ComboSelect>
                  <Icon name="chevron" />
                </Combo>
                <IconButton $w={25} aria-label="增大字号"><Icon name="grow" /></IconButton>
                <IconButton aria-label="减小字号"><Icon name="shrink" /></IconButton>
                <ToolSep />
                <IconButton aria-label="清除格式"><Icon name="clear" /></IconButton>
              </ToolRow>
              <ToolRow>
                <LetterButton $kind="b">B</LetterButton>
                <LetterButton $kind="i">I</LetterButton>
                <LetterButton $kind="u">U</LetterButton>
                <LetterButton $kind="s">S</LetterButton>
                <LetterButton $kind="ab">ab</LetterButton>
                <Drop icon="kerning" label="字符间距" />
                <DropButton aria-label="更改大小写">
                  <CaseLabel>Aa</CaseLabel>
                  <Icon name="chevron" />
                </DropButton>
                <ToolSep />
                <Drop icon="pen" label="突出显示" />
                <Drop icon="fontColor" label="字体颜色" />
              </ToolRow>
            </ToolRows>
          </GroupBody>
          <Footer name="字体" launcher dim />
        </Group>
        <Divider />

        <Group $w={223}>
          <GroupBody>
            <ToolRows $w={168}>
              <ToolRow>
                <ToolPart>
                  <Drop icon="bullets" label="项目符号" />
                  <Drop icon="numbers" label="编号" />
                </ToolPart>
                <ToolPart>
                  <Tool icon="outdent" label="降低列表级别" />
                  <Tool icon="indent" label="提高列表级别" />
                  <Drop icon="spacing" label="行距" />
                </ToolPart>
              </ToolRow>
              <ToolRow>
                <Tool icon="left" label="左对齐" />
                <Tool icon="center" label="居中" />
                <Tool icon="right" label="右对齐" />
                <Tool icon="justify" label="两端对齐" />
                <Tool icon="distribute" label="分散对齐" />
                <ToolSep />
                <Drop icon="columns" label="分栏" />
              </ToolRow>
            </ToolRows>
            <Stack>
              <Small icon="direction" label="文字方向" menu dim />
              <Small icon="alignText" label="对齐文本" menu dim />
              <Small icon="smartArt" label="转换为 SmartArt" menu dim />
            </Stack>
          </GroupBody>
          <Footer name="段落" launcher dim />
        </Group>
        <Divider />

        <Group $w={249}>
          <GroupBody>
            <Big icon="shapes" w={43} lines={["形状"]} menu="below" />
            <Big icon="arrange" w={43} lines={["排列"]} menu="below" />
            <Big icon="quick" w={56} lines={["快速样式"]} menu="below" dim />
            <Stack $tight>
              <Small icon="fill" text="形状填充" menu dim />
              <Small icon="outline" text="形状轮廓" menu dim />
              <Small icon="effects" text="形状效果" menu dim />
            </Stack>
          </GroupBody>
          <Footer name="绘图" launcher dim />
        </Group>
        <Divider />

        <Group $w={88}>
          <GroupBody $left={10}>
            <Stack $tight>
              <Small icon="find" text="查找" />
              <Small icon="replace" text="替换" menu />
              <Small icon="select" text="选择" menu />
            </Stack>
          </GroupBody>
          <Footer name="编辑" />
        </Group>
        <Divider />

        <Group $w={60}>
          <GroupBody>
            <Big icon="mic" w={44} lines={["听写"]} menu="below" />
          </GroupBody>
          <Footer name="语音" />
        </Group>
        <Divider />

        <Group $w={59}>
          <GroupBody>
            <Big icon="ideas" w={43} lines={["设计", "灵感"]} />
          </GroupBody>
          <Footer name="设计器" />
        </Group>
        <Divider />
        <Collapse aria-label="折叠功能区"><Icon name="caretUp" /></Collapse>
      </Ribbon>

      <QuickBar>
        <AutoSave>
          自动保存
          <Toggle>
            <ToggleInput type="checkbox" />
            关
          </Toggle>
        </AutoSave>
        <QuickItems items={QUICK_MAIN} />
        <QuickCombo $w={68} $h={22}>
          <ComboSelect aria-label="样式" disabled><option> </option></ComboSelect>
          <Icon name="chevron" />
        </QuickCombo>
        <QuickItems items={QUICK_END} />
        <QuickButton $on aria-label="自定义快速访问工具栏"><Icon name="more" /></QuickButton>
      </QuickBar>

      <Work>
        <SlidePane>
          <SlideItem>
            <SlideNumber>1</SlideNumber>
            <ThumbButton aria-label="幻灯片 1"><FirstThumb /></ThumbButton>
          </SlideItem>
          <SlideItem>
            <SlideNumber>2</SlideNumber>
            <ThumbButton $selected aria-label="幻灯片 2"><SecondThumb /></ThumbButton>
          </SlideItem>
        </SlidePane>

        <Stage>
          <Slide>
            <TableArea>
              <DataTable>
                <colgroup>
                  {COLUMNS.map(([name, width]) => (
                    <col key={name} width={width} />
                  ))}
                </colgroup>
                <thead>
                  <Row $tone="head" $h={27}>
                    {COLUMNS.map(([name]) => (
                      <HeadCell key={name} scope="col">{name}</HeadCell>
                    ))}
                  </Row>
                </thead>
                <tbody>
                  {ROWS.map((row) => (
                    <Row key={row.cells[0]} $tone={row.tone} $h={row.h}>
                      {row.cells.map((text, i) => (
                        <Cell key={i} $center={i === 2}>{text}</Cell>
                      ))}
                    </Row>
                  ))}
                </tbody>
              </DataTable>
              <PasteOptions>
                <Icon name="pasteSmall" />
                (Ctrl)
                <Icon name="down" />
              </PasteOptions>
            </TableArea>
          </Slide>
        </Stage>

        <ScrollBar>
          <ScrollButton aria-label="向上滚动"><Icon name="up" /></ScrollButton>
          <ScrollTrack><ScrollThumb /></ScrollTrack>
          <ScrollButton aria-label="向下滚动"><Icon name="down" /></ScrollButton>
          <ScrollButton $plain aria-label="上一张幻灯片"><Icon name="prev" /></ScrollButton>
          <ScrollButton $plain aria-label="下一张幻灯片"><Icon name="next" /></ScrollButton>
        </ScrollBar>
      </Work>

      <StatusBar>
        <StatusLeft>
          <SlideCount>幻灯片 第 1 张，共 2 张</SlideCount>
          <Icon name="book" />
          <span>中文(中国)</span>
        </StatusLeft>
        <NotesButton><Icon name="notes" />备注</NotesButton>
        <ViewButton $on aria-label="普通视图"><Icon name="normal" /></ViewButton>
        <ViewButton aria-label="幻灯片浏览"><Icon name="sorter" /></ViewButton>
        <ViewButton aria-label="阅读视图"><Icon name="reading" /></ViewButton>
        <ViewButton aria-label="幻灯片放映"><Icon name="present" /></ViewButton>
        <ZoomSign aria-label="缩小">−</ZoomSign>
        <ZoomRange type="range" min={0} max={100} defaultValue={33} aria-label="显示比例" />
        <ZoomSign aria-label="放大">+</ZoomSign>
        <ZoomValue>66%</ZoomValue>
        <FitButton aria-label="适应窗口"><Icon name="fit" /></FitButton>
      </StatusBar>

      <ClickHighlight viewBox="0 0 278 300" aria-hidden="true">
        <circle cx="138" cy="139" r="130" fill="none" stroke="#f08a9c" strokeOpacity="0.450" strokeWidth="16" />
        <circle cx="135" cy="260" r="26" fill="none" stroke="#f00a33" strokeOpacity="0.950" strokeWidth="16" />
        <path d="M136 220v27l6-5 5 11 5-2-5-11h9z" fill="#fff" stroke="#333" strokeWidth="1.500" />
      </ClickHighlight>
    </Window>
  );
}
